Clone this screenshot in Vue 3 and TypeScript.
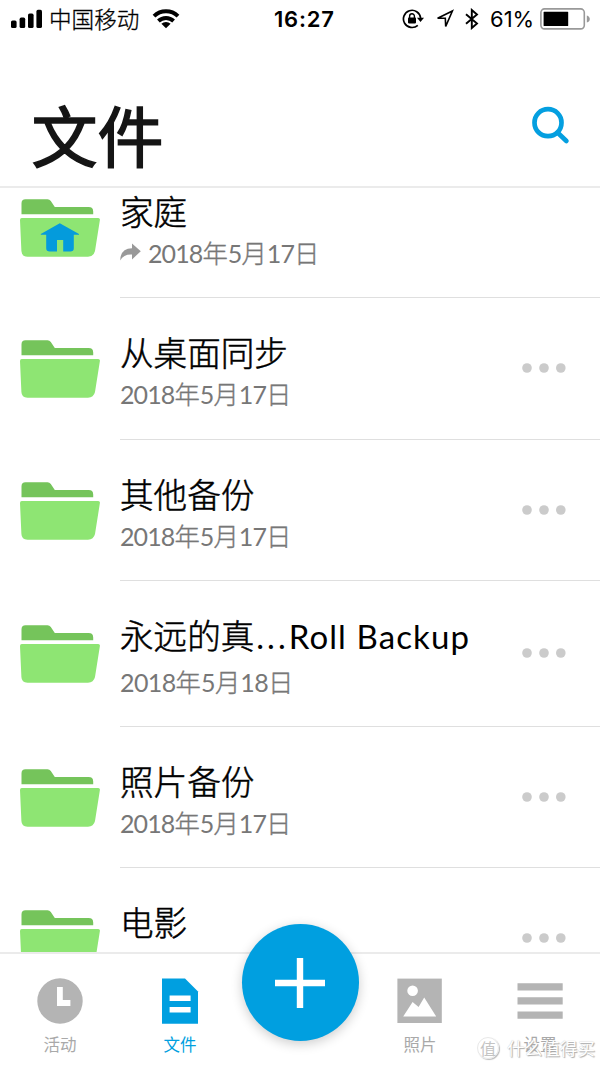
<script setup lang="ts">
interface Entry {
  name: string
  latin?: string
  date: string
  shared?: boolean
  home?: boolean
  size?: 'tall' | 'first' | 'roomy'
}

const entries: Entry[] = [
  { name: '家庭', date: '2018年5月17日', shared: true, home: true, size: 'first' },
  { name: '从桌面同步', date: '2018年5月17日', size: 'roomy' },
  { name: '其他备份', date: '2018年5月17日' },
  { name: '永远的真', latin: 'Roll Backup', date: '2018年5月18日', size: 'tall' },
  { name: '照片备份', date: '2018年5月17日' },
  { name: '电影', date: '' },
]

const dateParts = (date: string): string[] => date.match(/\d+|\D/g) ?? []
const isNumber = (part: string): boolean => /^\d/.test(part)
</script>

<template>
  <div class="screen">
    <div class="status">
      <svg class="signal" width="32" height="20" viewBox="0 0 32 20">
        <rect x="0" y="11.5" width="5.6" height="7.5" rx="1.6" />
        <rect x="8.6" y="8.6" width="5.6" height="10.4" rx="1.6" />
        <rect x="17" y="4.6" width="5.6" height="14.4" rx="1.6" />
        <rect x="25.4" y="0.8" width="5.6" height="18.2" rx="1.6" />
      </svg>
      <span class="carrier">中国移动</span>
      <svg class="wifi" width="28" height="20" viewBox="0 0 28 20">
        <g fill="none" stroke="#000" stroke-width="3.9">
          <path d="M2 7.2 A17.2 17.2 0 0 1 26 7.2" />
          <path d="M6.4 12 A11 11 0 0 1 21.6 12" />
        </g>
        <path d="M14 19.2 L9.4 14.8 A6.6 6.6 0 0 1 18.6 14.8 Z" />
      </svg>
      <span class="time">16:27</span>
      <svg class="lock" width="22" height="20" viewBox="0 0 22 20">
        <path d="M15.8 16.3 A8.6 8.6 0 1 1 18.6 9" fill="none" stroke="#000" stroke-width="1.7" />
        <path d="M15 8.8 H22 L18.5 13 Z" />
        <rect x="6" y="8.6" width="8" height="5.8" rx="0.8" />
        <path d="M7.6 9 V7.2 A2.4 2.4 0 0 1 12.4 7.2 V9" fill="none" stroke="#000" stroke-width="1.4" />
      </svg>
      <svg class="locate" width="18" height="20" viewBox="0 0 18 20">
        <path d="M1.6 9.3 L16.4 2 L9.7 17.4 L9.3 9.3 Z" fill="none" stroke="#000" stroke-width="1.6" />
      </svg>
      <svg class="bluetooth" width="14" height="22" viewBox="0 0 14 22">
        <path d="M1 6.2 L12 15.4 L6.8 20 V2 L12 6.6 L1 15.8" fill="none" stroke="#000" stroke-width="1.9" />
      </svg>
      <span class="percent">61%</span>
      <svg class="battery" width="50" height="22" viewBox="0 0 50 22">
        <rect x="0.9" y="0.9" width="43.4" height="20" rx="3.6" fill="none" stroke="#999" stroke-width="1.6" />
        <rect x="3.6" y="3.8" width="24.6" height="14.2" rx="0.6" />
        <path d="M46.8 7.4 Q49.8 8.4 49.8 11 Q49.8 13.6 46.8 14.6 Z" fill="#999" />
      </svg>
    </div>

    <header class="header">
      <h1>文件</h1>
      <svg class="search" width="40" height="40" viewBox="0 0 40 40">
        <circle cx="17" cy="16.7" r="13.5" />
        <path d="M27 27 L35.4 35" />
      </svg>
    </header>

    <main class="list">
      <section v-for="entry in entries" :key="entry.name" class="row" :class="entry.size">
        <svg class="folder" width="80" height="60" viewBox="0 0 80 60">
          <path d="M1.5 15.2 V4.2 Q1.5 0.2 5.5 0.2 H27.5 Q29.6 0.2 30.8 1.9 L34.8 8 H68.6 Q73.2 8 73.2 12.4 V15.2 Z" fill="#75c45b" />
          <path d="M1.8 19 H78.2 Q80.2 19 79.9 21 L75 52 Q73.6 57.7 68 57.7 H7.5 Q1.6 57.7 1.4 52 L0 21 Q0 19 1.8 19 Z" fill="#8ee573" />
          <path v-if="entry.home" d="M39.8 24.2 L59 34.9 V35.8 H53.8 V49.2 Q53.8 52.5 50.3 52.5 H43.2 V41 H37 V52.5 H29.8 Q26.2 52.5 26.2 49.2 V35.8 H20.8 V34.9 Z" fill="#049bdc" />
        </svg>
        <div class="info">
          <div class="texts">
            <div class="name">{{ entry.name }}<template v-if="entry.latin"><span class="dots">...</span><span class="latin">{{ entry.latin }}</span></template></div>
            <div class="date">
              <svg v-if="entry.shared" class="share" width="21" height="18" viewBox="0 0 21 18">
                <path d="M12 0.4 L20.8 8.2 L12 16.4 V11.6 Q4 11 0.2 17.4 Q0.4 5.6 12 5.2 Z" fill="#999" />
              </svg>
              <span v-for="(part, i) in dateParts(entry.date)" :key="i" :class="{ num: isNumber(part) }">{{ part }}</span>
            </div>
          </div>
          <svg v-if="!entry.home" class="more" width="44" height="10" viewBox="0 0 44 10">
            <circle cx="5" cy="5" r="4.8" />
            <circle cx="22" cy="5" r="4.8" />
            <circle cx="38.8" cy="5" r="4.8" />
          </svg>
        </div>
      </section>
    </main>

    <nav class="tabs">
      <div class="tab">
        <svg width="46" height="46" viewBox="0 0 46 46">
          <circle cx="23" cy="23" r="22.7" fill="#b4b4b4" />
          <path d="M20 9 H25.8 V22 H33.4 V28 H20 Z" fill="#fff" />
        </svg>
        <span>活动</span>
      </div>
      <div class="tab active">
        <svg width="46" height="46" viewBox="0 0 46 46">
          <path d="M5 0.5 H28 L41 13.5 V45.7 H5 Z" fill="#009fe0" />
          <path d="M12.6 17.4 H33.6 V23 H12.6 Z M12.6 29 H33.6 V34.6 H12.6 Z" fill="#fff" />
        </svg>
        <span>文件</span>
      </div>
      <div class="tab"></div>
      <div class="tab">
        <svg width="46" height="46" viewBox="0 0 46 46">
          <rect x="0.4" y="0.6" width="44.4" height="44.4" fill="#b4b4b4" />
          <circle cx="15.6" cy="12.8" r="5.3" fill="#fff" />
          <path d="M6.2 38.4 L15.6 24 L21.6 29 L27.2 19.6 L39.2 38.4 Z" fill="#fff" />
        </svg>
        <span>照片</span>
      </div>
      <div class="tab">
        <svg width="46" height="46" viewBox="0 0 46 46">
          <path d="M0.5 5.2 H45.7 V12.6 H0.5 Z M0.5 19.2 H45.7 V26.6 H0.5 Z M0.5 33.4 H45.7 V40.8 H0.5 Z" fill="#b4b4b4" />
        </svg>
        <span>设置</span>
      </div>
      <div class="add">
        <svg width="50" height="50" viewBox="0 0 50 50">
          <path d="M25 0 V50 M0 25 H50" stroke="#fff" stroke-width="6.4" />
        </svg>
      </div>
      <div class="brand">
        <span class="seal">值</span>
        <span class="brand-name">什么值得买</span>
      </div>
    </nav>
  </div>
</template>

<style>
body {
  background: #fff;
}
</style>

<style scoped>
.screen {
  width: 600px;
  height: 1065px;
  display: flex;
  flex-direction: column;
  overflow: hidden;
  background: #fff;
  font-family: "Noto Sans CJK SC", "Lato", sans-serif;
  color: #000;
}
svg {
  display: block;
  flex: none;
}
.status {
  height: 38px;
  flex: none;
  display: flex;
  align-items: center;
  white-space: nowrap;
}
.signal {
  margin-left: 11px;
}
.carrier {
  width: 92px;
  margin-left: 6px;
  font-size: 22.6px;
  line-height: 36px;
  font-weight: 300;
  -webkit-text-stroke: 0.3px #000;
}
.wifi {
  margin-left: 11px;
}
.time,
.percent {
  font-family: "Inter", sans-serif;
  font-size: 22px;
  line-height: 38px;
}
.time {
  width: 64px;
  margin-left: 94px;
  font-weight: 600;
  letter-spacing: 0.8px;
}
.lock {
  margin-left: 64px;
}
.locate {
  margin-left: 12px;
}
.bluetooth {
  margin-left: 11px;
}
.percent {
  width: 44px;
  margin-left: 11px;
}
.battery {
  margin-left: 6px;
}
.header {
  height: 148px;
  flex: none;
  display: flex;
  justify-content: space-between;
  border-bottom: 2px solid #ebebeb;
}
h1 {
  margin: 58px 0 0 31.5px;
  font-size: 66px;
  line-height: 74px;
  font-weight: 400;
  -webkit-text-stroke: 1.5px #151515;
  color: #151515;
}
.search {
  margin: 68px 29px 0 0;
  fill: none;
  stroke: #049fe0;
  stroke-width: 4.7;
  stroke-linecap: round;
}
.list {
  flex: 1;
  min-height: 0;
  overflow: hidden;
}
.row {
  height: 141px;
  display: flex;
  box-sizing: border-box;
}
.row.first {
  height: 110px;
}
.row.roomy {
  height: 142px;
}
.row.tall {
  height: 146px;
}
.folder {
  margin: 42px 0 0 20px;
}
.first .folder {
  margin-top: 11px;
}
.tall .folder {
  margin-top: 44px;
}
.info {
  flex: 1;
  margin-left: 20px;
  display: flex;
  justify-content: space-between;
  border-bottom: 1px solid #dfdfdf;
}
.texts {
  padding-top: 34px;
}
.first .texts {
  padding-top: 3px;
}
.name {
  height: 40px;
  font-size: 33.6px;
  line-height: 40px;
  font-weight: 300;
  -webkit-text-stroke: 0.5px #000;
  white-space: nowrap;
}
.latin,
.dots {
  font-family: "Lato", sans-serif;
  font-size: 33px;
  line-height: 1;
  font-weight: 400;
  letter-spacing: 1.1px;
  -webkit-text-stroke: 0;
}
.dots {
  margin-left: 2px;
  letter-spacing: 3px;
}
.date {
  height: 36px;
  margin-top: 3px;
  display: flex;
  align-items: baseline;
  font-size: 25.4px;
  line-height: 36px;
  font-weight: 300;
  -webkit-text-stroke: 0.35px #777;
  color: #777;
}
.tall .date {
  margin-top: 8px;
}
.num {
  font-family: "Lato", sans-serif;
  font-size: 25px;
  line-height: 1;
  font-weight: 400;
  letter-spacing: -0.9px;
  -webkit-text-stroke: 0;
}
.tall .num {
  letter-spacing: -0.6px;
}
.share {
  align-self: center;
  margin-right: 7px;
}
.more {
  margin: 65px 34px 0 0;
  fill: #cbcbcb;
}
.tall .more {
  margin-top: 67px;
}
.tabs {
  position: relative;
  height: 111px;
  flex: none;
  display: flex;
  border-top: 2px solid #ebebeb;
  background: #fff;
}
.tab {
  width: 120px;
  padding-top: 24px;
  display: flex;
  flex-direction: column;
  align-items: center;
  font-size: 16.5px;
  line-height: 24px;
  font-weight: 400;
  color: #a9a9a9;
}
.tab span {
  margin-top: 8px;
}
.tab.active {
  color: #009fe0;
}
.add {
  position: absolute;
  left: 241.5px;
  top: -30px;
  width: 117px;
  height: 117px;
  display: flex;
  align-items: center;
  justify-content: center;
  border-radius: 50%;
  background: #009fe0;
  box-shadow: 0 3px 12px rgba(0, 0, 0, 0.2);
}
.brand {
  position: absolute;
  left: 477px;
  top: 81px;
  display: flex;
  align-items: center;
  color: #fff;
  text-shadow: 1px 1px 1px #aaa, 0 0 1px #bbb;
  white-space: nowrap;
}
.seal {
  width: 20px;
  height: 20px;
  border: 1px solid #e8e8e8;
  border-radius: 50%;
  box-shadow: 1px 1px 1px #bbb;
  font-size: 16px;
  line-height: 20px;
  text-align: center;
  color: #c4c4c4;
  text-shadow: none;
}
.brand-name {
  margin-left: 8px;
  font-size: 17.6px;
  line-height: 26px;
}
</style>
